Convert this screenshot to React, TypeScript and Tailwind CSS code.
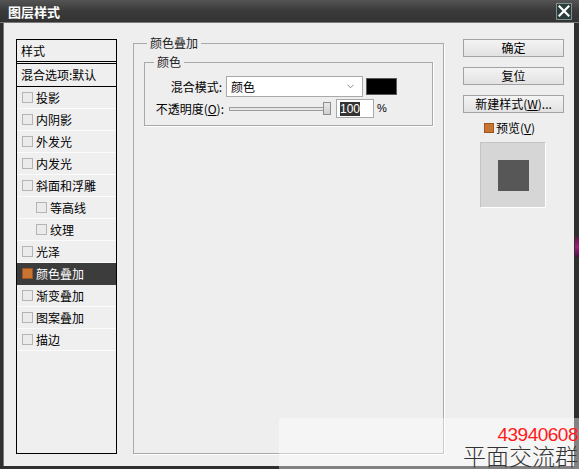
import React from "react";

type Item = { t: string; indent?: boolean; sel?: boolean };

const items: Item[] = [
  { t: "投影" },
  { t: "内阴影" },
  { t: "外发光" },
  { t: "内发光" },
  { t: "斜面和浮雕" },
  { t: "等高线", indent: true },
  { t: "纹理", indent: true },
  { t: "光泽" },
  { t: "颜色叠加", sel: true },
  { t: "渐变叠加" },
  { t: "图案叠加" },
  { t: "描边" },
];

function Check({ on }: { on?: boolean }) {
  return (
    <span
      className={
        on
          ? "block w-[11px] h-[11px] shrink-0 border border-[#9c5424] bg-[#c97430]"
          : "block w-[11px] h-[11px] shrink-0 border border-[#b4b4b4] bg-[#ebebeb]"
      }
    />
  );
}

function Btn({ children }: { children: React.ReactNode }) {
  return (
    <div className="h-[18px] w-full flex items-center justify-center border border-[#a3a3a3] bg-gradient-to-b from-[#f4f4f4] to-[#e2e2e2] text-[12px] leading-none text-black">
      {children}
    </div>
  );
}

export default function App() {
  return (
    <div className="relative w-[579px] h-[469px] overflow-hidden bg-[#2f2f2f] font-['Noto_Sans_CJK_SC',sans-serif] text-[12px] text-black">
      {/* Title bar */}
      <div className="h-[23px] flex items-center border-b border-[#7a7a7a] bg-gradient-to-b from-[#545454] via-[#3a3a3a] to-[#333333]">
        <span className="ml-[8px] text-[13px] font-bold leading-none text-white">图层样式</span>
        <div className="ml-auto mr-[7px] w-[16px] h-[17px] border border-[#80928f] bg-[#2b3d3a] flex items-center justify-center">
          <svg width="12" height="12" viewBox="0 0 12 12">
            <path d="M1.5 1.5 L10.5 10.5 M10.5 1.5 L1.5 10.5" stroke="#ffffff" strokeWidth="2.2" strokeLinecap="square" />
          </svg>
        </div>
      </div>

      {/* Body */}
      <div className="ml-[3px] w-[571px] h-[443px] border-l border-[#777777] bg-[#eeeeee] flex items-start pl-[12px]">
        {/* Style list */}
        <div className="mt-[16px] w-[101px] h-[415px] shrink-0 border border-black bg-[#efefef] flex flex-col">
          <div className="h-[22px] shrink-0 border-b border-black flex items-center pl-[4px] leading-none">样式</div>
          <div className="h-[1px] shrink-0" />
          <div className="h-[24px] shrink-0 border-y border-black flex items-center pl-[4px] leading-none">混合选项:默认</div>
          {items.map((it) => (
            <div
              key={it.t}
              className={
                (it.sel
                  ? "bg-[#3c3c3c] text-white border-[#3c3c3c] "
                  : "border-[#fbfbfb] ") +
                (it.indent ? "pl-[19px] " : "pl-[5px] ") +
                "h-[22px] shrink-0 border-b flex items-center gap-[3px] leading-none"
              }
            >
              <Check on={it.sel} />
              <span>{it.t}</span>
            </div>
          ))}
        </div>

        {/* Main group */}
        <fieldset className="mt-[12px] ml-[16px] w-[311px] h-[419px] shrink-0 border border-[#a9a9a9] shadow-[1px_1px_0_#ffffff]">
          <legend className="ml-[13px] px-[3px] leading-[16px] text-[#222]">颜色叠加</legend>
          <fieldset className="ml-[10px] mt-[3px] w-[289px] border border-[#a9a9a9] shadow-[1px_1px_0_#ffffff]">
            <legend className="ml-[9px] px-[3px] leading-[16px] text-[#222]">颜色</legend>
            <div className="flex flex-col gap-[1px] pt-[6px] pb-[6px]">
              <div className="flex items-center h-[21px]">
                <span className="w-[77px] shrink-0 text-right leading-none">混合模式:</span>
                <div className="ml-[4px] w-[137px] h-[21px] bg-white border border-[#a9a9a9] flex items-center justify-between pl-[4px] pr-[8px]">
                  <span className="leading-none">颜色</span>
                  <svg width="7" height="5" viewBox="0 0 7 5">
                    <path d="M0.5 0.8 L3.5 3.8 L6.5 0.8" stroke="#8a8a8a" strokeWidth="1" fill="none" />
                  </svg>
                </div>
                <div className="ml-[3px] w-[31px] h-[17px] bg-black border border-[#5a5a5a]" />
              </div>
              <div className="flex items-center h-[21px]">
                <span className="w-[79px] shrink-0 text-right leading-none">
                  不透明度(<span className="underline">O</span>):
                </span>
                <div className="relative ml-[5px] w-[103px] h-[13px] shrink-0">
                  <div className="absolute left-0 top-[5px] w-[96px] h-[4px] border border-[#9d9d9d] bg-[#e6e6e6]" />
                  <div className="absolute left-[94px] top-0 w-[8px] h-[13px] border border-[#8f8f8f] bg-gradient-to-b from-[#e8e8e8] to-[#cfcfcf]" />
                </div>
                <div className="ml-[4px] w-[38px] h-[19px] bg-white border border-[#a9a9a9] flex items-center pl-[3px]">
                  <span className="bg-[#333333] text-white px-[0px] leading-[14px] font-['Liberation_Sans',sans-serif] text-[12px]">100</span>
                </div>
                <span className="ml-[3px] leading-none font-['Liberation_Sans',sans-serif] text-[11px]">%</span>
              </div>
            </div>
          </fieldset>
        </fieldset>

        {/* Right column */}
        <div className="ml-[19px] mt-[16px] w-[101px] shrink-0 flex flex-col">
          <Btn>确定</Btn>
          <div className="h-[10px]" />
          <Btn>复位</Btn>
          <div className="h-[10px]" />
          <Btn>
            新建样式(<span className="underline">W</span>)...
          </Btn>
          <div className="mt-[9px] h-[12px] flex items-center pl-[21px] gap-[2px]">
            <span className="block w-[10px] h-[10px] border border-[#9c5424] bg-[#c97430]" />
            <span className="leading-none">
              预览(<span className="underline">V</span>)
            </span>
          </div>
          <div className="mt-[8px] ml-[17px] w-[66px] h-[66px] border-t border-l border-[#c4c4c4] border-r-white border-b-white border-r border-b bg-[#d6d6d6] flex items-center justify-center">
            <div className="w-[31px] h-[31px] bg-[#575757]" />
          </div>
        </div>
      </div>

      {/* background decoration at right edge */}
      <div className="absolute left-[575px] top-[237px] w-[4px] h-[20px] bg-gradient-to-b from-[#5a1a4a] via-[#a0207a] to-[#4a1040]" />

      {/* Watermark overlay */}
      <div className="absolute left-[279px] top-[418px] w-[300px] h-[51px] bg-white/40">
        <span className="absolute right-[1px] top-[7px] text-[19px] leading-none tracking-[-0.5px] text-[#ff1a1a] font-['Liberation_Sans',sans-serif]">
          43940608
        </span>
        <span className="absolute right-[1px] top-[26px] text-[23px] leading-none font-light text-[#333333] font-['Noto_Sans_CJK_SC',sans-serif]">
          平面交流群
        </span>
      </div>
    </div>
  );
}
